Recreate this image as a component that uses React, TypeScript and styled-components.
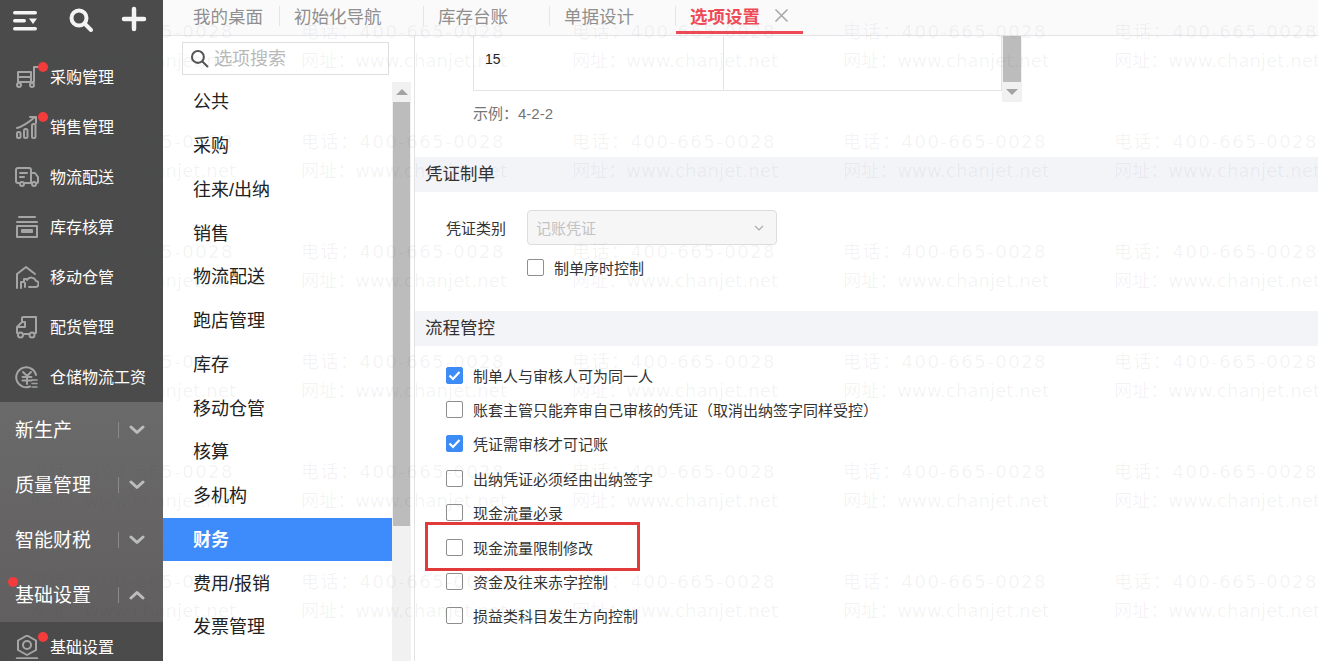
import React from 'react';
import styled, { createGlobalStyle } from 'styled-components';

const GlobalStyle = createGlobalStyle`
    html, body {
        margin: 0;
        padding: 0;
        height: 100%;
        overflow: hidden;
        background: #fff;
        font-family: "Liberation Sans", "Noto Sans CJK SC", sans-serif;
    }
    #root { height: 100%; }
    * { box-sizing: border-box; }
`;

const Page = styled.div`
    position: relative;
    display: flex;
    width: 1318px;
    height: 661px;
    overflow: hidden;
    color: #333;
`;

//
//Left navigation
const Sidebar = styled.aside`
    flex: 0 0 163px;
    display: flex;
    flex-direction: column;
    background: #4b4b4b;
    color: #fff;
`;
const TopIcons = styled.div`
    height: 52px;
    flex: none;
    display: flex;
    align-items: flex-start;
    padding: 8px 0 0 12px;
    gap: 31px;
    color: #f4f4f4;
`;
const NavItem = styled.div`
    position: relative;
    flex: none;
    height: 50px;
    display: flex;
    align-items: center;
    padding-left: 15px;
    gap: 11px;
    font-size: 16px;
    color: #a5a5a5;
`;
const NavLabel = styled.span`
    color: #fff;
    white-space: nowrap;
    margin-top: -2px;
`;
const Dot = styled.i<{ $left: number; $top: number }>`
    position: absolute;
    left: ${(p) => p.$left}px;
    top: ${(p) => p.$top}px;
    width: 10px;
    height: 10px;
    border-radius: 50%;
    background: #f53b3b;
`;
const GroupList = styled.div`
    flex: none;
    background: linear-gradient(#6b6a6a, #615f5f);
`;
const Group = styled.div`
    position: relative;
    height: 55px;
    display: flex;
    align-items: center;
    padding-left: 15px;
    font-size: 19px;
    color: #fff;
`;
const GroupName = styled.span`
    width: 103px;
    margin-top: -2px;
`;
const GroupTail = styled.span`
    display: flex;
    align-items: center;
    height: 16px;
    padding-left: 10px;
    border-left: 1px solid #8b8a8a;
    color: #bdbdbd;
`;

//
//Top tabs
const Main = styled.main`
    flex: 1;
    min-width: 0;
    display: flex;
    flex-direction: column;
`;
const TabBar = styled.nav`
    flex: none;
    height: 36px;
    display: flex;
    padding: 0 0 0 16px;
    background: #fafafa;
    border-bottom: 1px solid #e4e4e8;
`;
const Tab = styled.div<{ $width: number; $active?: boolean }>`
    position: relative;
    flex: none;
    width: ${(p) => p.$width}px;
    height: ${(p) => (p.$active ? '34px' : '30px')};
    display: flex;
    align-items: center;
    padding-left: 14px;
    font-size: 17.5px;
    color: ${(p) => (p.$active ? '#ee4a56' : '#8f8f8f')};
    font-weight: ${(p) => (p.$active ? 700 : 400)};
    border-bottom: ${(p) => (p.$active ? '3px solid #ee4a56' : '0')};
    &::after {
        content: '';
        display: ${(p) => (p.$active ? 'none' : 'block')};
        position: absolute;
        right: 0;
        top: 6px;
        height: 20px;
        width: 1px;
        background: #e6e6e6;
    }
`;
const TabClose = styled.span`
    display: flex;
    margin-left: 14px;
    color: #a9a9a9;
`;

const Body = styled.div`
    flex: 1;
    min-height: 0;
    display: flex;
`;

//
//Option list
const OptionPanel = styled.div`
    flex: 0 0 252px;
    display: flex;
    flex-direction: column;
    border-right: 1px solid #e2e2e2;
`;
const SearchBox = styled.div`
    flex: none;
    width: 207px;
    height: 33px;
    margin: 6px 0 5px 19px;
    display: flex;
    align-items: center;
    gap: 5px;
    padding: 0 0 3px 7px;
    border: 1px solid #dedede;
    font-size: 18px;
    color: #b9b9b9;
    background: #fff;
`;
const SearchGlyph = styled.span`
    display: flex;
    margin-top: 3px;
    color: #555;
`;
const OptionScroller = styled.div`
    flex: 1;
    min-height: 0;
    display: flex;
`;
const OptionList = styled.ul`
    width: 229px;
    margin: 0;
    padding: 0;
    list-style: none;
`;
const OptionRow = styled.li<{ $selected?: boolean }>`
    height: 43.75px;
    display: flex;
    align-items: center;
    padding: 0 0 3px 30px;
    font-size: 18px;
    color: ${(p) => (p.$selected ? '#fff' : '#222')};
    font-weight: ${(p) => (p.$selected ? 700 : 400)};
    background: ${(p) => (p.$selected ? '#3e8bfb' : 'transparent')};
`;
const ScrollTrack = styled.div<{ $width: number; $thumbHeight: number }>`
    flex: none;
    width: ${(p) => p.$width}px;
    display: flex;
    flex-direction: column;
    align-items: center;
    background: #f1f1f1;
    color: #a3a3a3;
    & > b {
        width: calc(100% - 2px);
        height: ${(p) => p.$thumbHeight}px;
        flex: none;
        background: #bcbcbc;
    }
`;
const ArrowBox = styled.span`
    flex: none;
    height: 20px;
    display: flex;
    align-items: center;
    justify-content: center;
`;
const TrackGap = styled.div`
    flex: none;
    width: 19px;
    padding-top: 2px;
    display: flex;
`;

//
//Settings content
const Content = styled.section`
    flex: 1;
    min-width: 0;
    display: flex;
    flex-direction: column;
`;
const TableArea = styled.div`
    flex: none;
    display: flex;
    margin-left: 58px;
    height: 66px;
`;
const CellTable = styled.div`
    width: 529px;
    height: 55px;
    display: grid;
    grid-template-columns: 249px 1fr;
    border: 1px solid #e4e4e4;
    border-top: 0;
    font-size: 14px;
    color: #222;
`;
const Cell = styled.div`
    display: flex;
    align-items: center;
    padding: 0 0 8px 11px;
    & + & { border-left: 1px solid #e4e4e4; }
`;
const Hint = styled.p`
    margin: 0 0 31px 58px;
    height: 24px;
    line-height: 24px;
    font-size: 15px;
    color: #757575;
`;
const SectionTitle = styled.h3`
    margin: 0;
    flex: none;
    height: 35px;
    line-height: 35px;
    padding-left: 10px;
    font-size: 17.5px;
    font-weight: 400;
    color: #333;
    background: #f3f4f8;
`;
const FormRow = styled.div`
    display: flex;
    align-items: center;
    height: 35px;
    margin-top: 18px;
    padding-left: 31px;
`;
const FieldLabel = styled.label`
    width: 81px;
    font-size: 15px;
    color: #333;
`;
const Select = styled.div`
    width: 250px;
    height: 35px;
    display: flex;
    align-items: center;
    justify-content: space-between;
    padding: 0 12px 0 8px;
    border: 1px solid #dcdcdc;
    border-radius: 4px;
    background: #f6f6f6;
    font-size: 15px;
    color: #c2c2c2;
`;
const CheckRow = styled.div<{ $boxed?: boolean; $indent: number }>`
    position: relative;
    height: 34.4px;
    display: flex;
    align-items: center;
    gap: 10px;
    padding-left: ${(p) => p.$indent}px;
    font-size: 15px;
    color: #333;
    white-space: nowrap;
    &::after {
        content: '';
        display: ${(p) => (p.$boxed ? 'block' : 'none')};
        position: absolute;
        box-sizing: border-box;
        left: 10px;
        top: -8px;
        width: 215px;
        height: 49px;
        border: 3px solid #e03a3a;
    }
`;
const Box = styled.span<{ $checked?: boolean }>`
    flex: none;
    width: 17px;
    height: 17px;
    display: flex;
    align-items: center;
    justify-content: center;
    border-radius: 2px;
    background: ${(p) => (p.$checked ? '#3d8bf5' : '#fff')};
    border: 1px solid ${(p) => (p.$checked ? '#3d8bf5' : '#8e8e8e')};
    color: #fff;
`;
const CheckList = styled.div`
    padding: 11.5px 0 27.5px;
    border-bottom: 1px solid #eeeeee;
`;
const SingleCheck = styled.div`
    margin-top: 5px;
    margin-bottom: 27px;
`;

//
//Watermark sits on top of the whole page
const Watermark = styled.div`
    position: absolute;
    inset: 0;
    pointer-events: none;
    display: grid;
    grid-template-columns: repeat(5, 271px);
    grid-auto-rows: 110px;
    padding: 17px 0 0 30px;
    font-family: "DejaVu Sans", "Noto Sans CJK SC", sans-serif;
    font-size: 18px;
    line-height: 29px;
    color: rgba(70, 75, 90, 0.065);
    white-space: nowrap;
    overflow: hidden;
`;
const Mark = styled.div<{ $spaced?: boolean }>`
    letter-spacing: ${(p) => (p.$spaced ? '1.5px' : '0.1px')};
`;

//
//Icons
const Svg = ({ size = 24, children }: { size?: number; children: React.ReactNode }) => (
    <svg width={size} height={size} viewBox="0 0 24 24" fill="none" stroke="currentColor" strokeWidth="2" strokeLinecap="round" strokeLinejoin="round">
        {children}
    </svg>
);

const navIcons: Record<string, React.ReactNode> = {
    cart: (
        <>
            <path d="M23 2h-4v15H3V7h13v10" />
            <path d="M3 12h13" />
            <circle cx="4" cy="20" r="2" />
            <circle cx="17" cy="20" r="2" />
        </>
    ),
    chart: (
        <>
            <path d="M2 13C6 12 13 8 20 2" />
            <path d="M15 2h6v6" />
            <rect x="2" y="17" width="3.5" height="6" rx="1.5" />
            <rect x="9" y="14" width="3.5" height="9" rx="1.5" />
            <rect x="17" y="9" width="3.5" height="14" rx="1.5" />
        </>
    ),
    truck: (
        <>
            <path d="M5 18H3a2 2 0 0 1-2-2V5a2 2 0 0 1 2-2h11a2 2 0 0 1 2 2v13H9" />
            <path d="M16 8h4l3 4v5a1 1 0 0 1-1 1h-1M16 18h1" />
            <path d="M5 8h7M5 12h4" />
            <circle cx="7" cy="19" r="2" />
            <circle cx="19" cy="19" r="2" />
        </>
    ),
    stock: (
        <>
            <path d="M4 2h16" />
            <path d="M2 7h20" />
            <rect x="2" y="11" width="20" height="11" />
            <path d="M7 15h10v2H7z" />
        </>
    ),
    house: (
        <>
            <path d="M2 23V9l9-7 9 7" />
            <path d="M6 23v-6h3v-3h3" />
            <path d="M14 22h6a3 3 0 0 0 1-6 5 5 0 0 0-9-1" />
            <path d="M10 18v4" />
        </>
    ),
    delivery: (
        <>
            <path d="M2 18v-6l5-5V3a1 1 0 0 1 1-1h13v16h-1" />
            <path d="M3 12h7V7H7" />
            <path d="M9 19h5" />
            <circle cx="5.5" cy="20" r="2.5" />
            <circle cx="17" cy="20" r="2.5" />
        </>
    ),
    wage: (
        <>
            <path d="M15 21.5A10 10 0 1 1 21 10" />
            <path d="M8 7l4 4 4-4M7.5 12h9M7.5 15.5h9M12 11v8" />
            <path d="M17 15h5M17 18.5h5M17 22h5" strokeWidth="1.6" />
        </>
    ),
    gear: (
        <>
            <path d="M12 0.5l9 5v9.500l-9 5-9-5V5.500z" />
            <circle cx="12" cy="10" r="4" />
            <path d="M2 23.500h20" strokeWidth="2.400" />
        </>
    ),
};

const MenuIcon = () => (
    <svg width="26" height="24" viewBox="0 0 26 24" fill="currentColor">
        <rect x="1" y="3" width="24" height="3.5" rx="1.7" />
        <rect x="1" y="11" width="13" height="3.5" rx="1.7" />
        <rect x="1" y="19" width="24" height="3.5" rx="1.7" />
        <path d="M17 10.5h8l-4 5.5z" />
    </svg>
);
const SearchIcon = ({ size, width }: { size: number; width: number }) => (
    <svg width={size} height={size} viewBox="0 0 24 24" fill="none" stroke="currentColor" strokeWidth={width} strokeLinecap="round">
        <circle cx="10" cy="10" r="7.5" />
        <path d="M16 16l6 6" />
    </svg>
);
const PlusSvg = styled.svg`
    margin: -2px 0 0 -3px;
`;
const PlusIcon = () => (
    <PlusSvg width="26" height="26" viewBox="0 0 26 26" fill="none" stroke="currentColor" strokeWidth="4.5" strokeLinecap="round">
        <path d="M13 3v20M3 13h20" />
    </PlusSvg>
);
const Chevron = ({ up }: { up?: boolean }) => (
    <svg width="16" height="10" viewBox="0 0 16 10" fill="none" stroke="currentColor" strokeWidth="3" strokeLinecap="round" strokeLinejoin="round">
        <path d={up ? 'M2 8l6-5.5L14 8' : 'M2 2l6 5.5L14 2'} />
    </svg>
);
const Triangle = ({ up, size = 12 }: { up?: boolean; size?: number }) => (
    <svg width={size} height={size / 2} viewBox="0 0 12 6" fill="currentColor">
        <path d={up ? 'M6 0l6 6H0z' : 'M0 0h12L6 6z'} />
    </svg>
);
const Check = () => (
    <svg width="13" height="13" viewBox="0 0 13 13" fill="none" stroke="currentColor" strokeWidth="2.2">
        <path d="M1.5 6.5l3.5 3.5 6.5-7" />
    </svg>
);

const navItems = [
    { icon: 'cart', label: '采购管理', dot: true },
    { icon: 'chart', label: '销售管理', dot: true },
    { icon: 'truck', label: '物流配送' },
    { icon: 'stock', label: '库存核算' },
    { icon: 'house', label: '移动仓管' },
    { icon: 'delivery', label: '配货管理' },
    { icon: 'wage', label: '仓储物流工资' },
];
const groups = [
    { label: '新生产' },
    { label: '质量管理' },
    { label: '智能财税' },
    { label: '基础设置', open: true, dot: true },
];
const tabs = [
    { label: '我的桌面', width: 101 },
    { label: '初始化导航', width: 144 },
    { label: '库存台账', width: 126 },
    { label: '单据设计', width: 126 },
];
const options = ['公共', '采购', '往来/出纳', '销售', '物流配送', '跑店管理', '库存', '移动仓管', '核算', '多机构', '财务', '费用/报销', '发票管理'];
const checks = [
    { label: '制单人与审核人可为同一人', checked: true },
    { label: '账套主管只能弃审自己审核的凭证（取消出纳签字同样受控）' },
    { label: '凭证需审核才可记账', checked: true },
    { label: '出纳凭证必须经由出纳签字' },
    { label: '现金流量必录' },
    { label: '现金流量限制修改', boxed: true },
    { label: '资金及往来赤字控制' },
    { label: '损益类科目发生方向控制' },
];

const App = () => {
    const tiles = Array.from({ length: 30 }, (_, i) => i);
    return (
        <Page>
            <GlobalStyle />
            <Sidebar>
                <TopIcons>
                    <MenuIcon />
                    <SearchIcon size={24} width={4} />
                    <PlusIcon />
                </TopIcons>
                {navItems.map((item) => (
                    <NavItem key={item.label}>
                        <Svg>{navIcons[item.icon]}</Svg>
                        <NavLabel>{item.label}</NavLabel>
                        {item.dot && <Dot $left={38} $top={10} />}
                    </NavItem>
                ))}
                <GroupList>
                    {groups.map((group) => (
                        <Group key={group.label}>
                            <GroupName>{group.label}</GroupName>
                            <GroupTail>
                                <Chevron up={group.open} />
                            </GroupTail>
                            {group.dot && <Dot $left={8} $top={10} />}
                        </Group>
                    ))}
                </GroupList>
                <NavItem>
                    <Svg>{navIcons.gear}</Svg>
                    <NavLabel>基础设置</NavLabel>
                    <Dot $left={38} $top={10} />
                </NavItem>
            </Sidebar>

            <Main>
                <TabBar>
                    {tabs.map((tab) => (
                        <Tab key={tab.label} $width={tab.width}>
                            {tab.label}
                        </Tab>
                    ))}
                    <Tab $width={127} $active>
                        选项设置
                        <TabClose>
                            <svg width="15" height="15" viewBox="0 0 15 15" stroke="currentColor" strokeWidth="1.6">
                                <path d="M1.5 1.5l12 12M13.5 1.5l-12 12" />
                            </svg>
                        </TabClose>
                    </Tab>
                </TabBar>
                <Body>
                    <OptionPanel>
                        <SearchBox>
                            <SearchGlyph>
                                <SearchIcon size={19} width={2.6} />
                            </SearchGlyph>
                            选项搜索
                        </SearchBox>
                        <OptionScroller>
                            <OptionList>
                                {options.map((option) => (
                                    <OptionRow key={option} $selected={option === '财务'}>
                                        {option}
                                    </OptionRow>
                                ))}
                            </OptionList>
                            <TrackGap>
                                <ScrollTrack $width={19} $thumbHeight={424}>
                                    <ArrowBox>
                                        <Triangle up />
                                    </ArrowBox>
                                    <b />
                                </ScrollTrack>
                            </TrackGap>
                        </OptionScroller>
                    </OptionPanel>

                    <Content>
                        <TableArea>
                            <CellTable>
                                <Cell>15</Cell>
                                <Cell />
                            </CellTable>
                            <ScrollTrack $width={20} $thumbHeight={46}>
                                <b />
                                <ArrowBox>
                                    <Triangle />
                                </ArrowBox>
                            </ScrollTrack>
                        </TableArea>
                        <Hint>示例：4-2-2</Hint>

                        <SectionTitle>凭证制单</SectionTitle>
                        <FormRow>
                            <FieldLabel>凭证类别</FieldLabel>
                            <Select>
                                记账凭证
                                <svg width="10" height="6" viewBox="0 0 10 6" fill="none" stroke="#a9a9a9" strokeWidth="1.1">
                                    <path d="M1 1l4 4 4-4" />
                                </svg>
                            </Select>
                        </FormRow>
                        <SingleCheck>
                            <CheckRow $indent={112}>
                                <Box />
                                制单序时控制
                            </CheckRow>
                        </SingleCheck>

                        <SectionTitle>流程管控</SectionTitle>
                        <CheckList>
                            {checks.map((item) => (
                                <CheckRow key={item.label} $indent={31} $boxed={item.boxed}>
                                    <Box $checked={item.checked}>{item.checked && <Check />}</Box>
                                    {item.label}
                                </CheckRow>
                            ))}
                        </CheckList>
                    </Content>
                </Body>
            </Main>

            <Watermark aria-hidden="true">
                {tiles.map((i) => (
                    <div key={i}>
                        <Mark $spaced>电话：400-665-0028</Mark>
                        <Mark>网址：www.chanjet.net</Mark>
                    </div>
                ))}
            </Watermark>
        </Page>
    );
};

export default App;
